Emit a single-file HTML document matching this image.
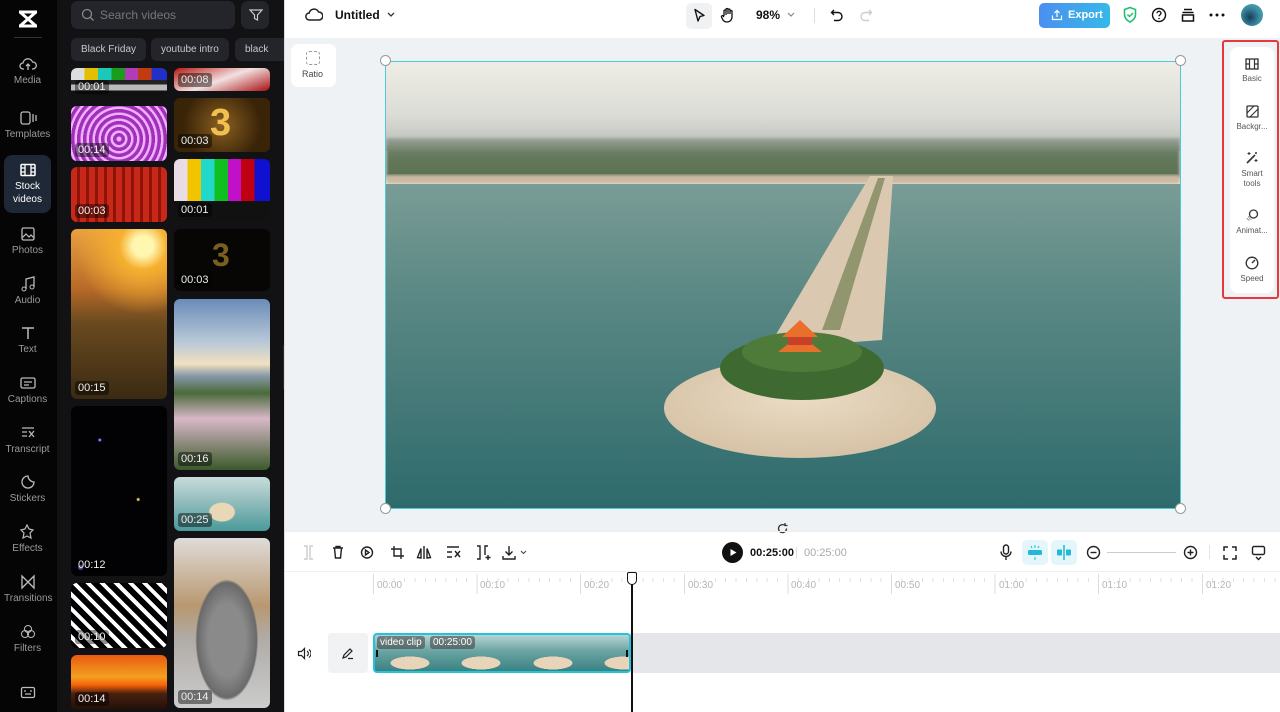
<!DOCTYPE html>
<html><head><meta charset="utf-8"><style>
*{box-sizing:border-box;margin:0;padding:0}
body{width:1280px;height:712px;overflow:hidden;font-family:"Liberation Sans",sans-serif;background:#fff;position:relative}
.abs{position:absolute}
#rail{left:0;top:0;width:57px;height:712px;background:#050505}
.ri{position:absolute;left:4px;width:47px;text-align:center;color:#9a9a9e;font-size:10px}
.ri svg{display:block;margin:0 auto 3px}
#panel{left:57px;top:0;width:227px;height:712px;background:#121215}
.th{position:absolute;border-radius:6px;overflow:hidden}
.th span{position:absolute;left:4px;bottom:4px;background:rgba(0,0,0,.45);color:#eee;font-size:11px;padding:1px 3px;border-radius:3px}
.tag{position:absolute;top:38px;height:23px;background:#24252a;border-radius:6px;color:#c8c8cc;font-size:10px;line-height:23px;padding:0 10px;white-space:nowrap}
#canvas{left:285px;top:38px;width:995px;height:493px;background:#eff2f5}
.ic{position:absolute}
.rb{position:absolute;left:0;width:48px;text-align:center;color:#555;font-size:8px;line-height:10px}
.rb svg{display:block;margin:0 auto 4px}
.rl{position:absolute;top:580px;font-size:10px;color:#b5b5b8}
</style></head><body>

<div id="rail" class="abs">
  <svg class="abs" style="left:16px;top:9px" width="24" height="20" viewBox="0 0 24 20"><path d="M3 3 L21 3 M3 17 L21 17 M4 3 L20 17 M20 3 L4 17" stroke="#fff" stroke-width="3" fill="none"/></svg>
  <div class="abs" style="left:14px;top:37px;width:28px;height:1px;background:#333"></div>
  <div class="ri" style="top:56px"><svg width="18" height="16" viewBox="0 0 18 16"><path d="M5 13H4a3 3 0 010-6 5 5 0 019.6-1A3.5 3.5 0 0114 13h-1M9 14V8M7 10l2-2 2 2" stroke="#bbb" stroke-width="1.3" fill="none"/></svg>Media</div>
  <div class="ri" style="top:110px"><svg width="18" height="16" viewBox="0 0 18 16"><rect x="2" y="2" width="9" height="12" rx="2" stroke="#bbb" stroke-width="1.3" fill="none"/><path d="M14 4v8M17 5v6" stroke="#bbb" stroke-width="1.3"/></svg>Templates</div>
  <div class="abs" style="left:4px;top:155px;width:47px;height:58px;background:#1f2836;border-radius:8px"></div>
  <div class="ri" style="top:163px;color:#fff;line-height:13px"><svg width="18" height="14" viewBox="0 0 18 14"><rect x="2" y="1.5" width="14" height="11" rx="1" stroke="#fff" stroke-width="1.5" fill="none"/><path d="M6 1.5v11M12 1.5v11M2 5h4M2 9h4M12 5h4M12 9h4" stroke="#fff" stroke-width="1.3"/></svg>Stock<br>videos</div>
  <div class="ri" style="top:226px"><svg width="18" height="16" viewBox="0 0 18 16"><rect x="3" y="2" width="12" height="12" rx="1.5" stroke="#bbb" stroke-width="1.3" fill="none"/><path d="M3 12l4-4 3 3 2-2 3 3" stroke="#bbb" stroke-width="1.2" fill="none"/></svg>Photos</div>
  <div class="ri" style="top:276px"><svg width="18" height="16" viewBox="0 0 18 16"><path d="M7 13V3l8-2v10" stroke="#bbb" stroke-width="1.3" fill="none"/><circle cx="5" cy="13" r="2" stroke="#bbb" fill="none"/><circle cx="13" cy="11" r="2" stroke="#bbb" fill="none"/></svg>Audio</div>
  <div class="ri" style="top:325px"><svg width="18" height="16" viewBox="0 0 18 16"><path d="M3 3h12M9 3v11" stroke="#bbb" stroke-width="1.5"/></svg>Text</div>
  <div class="ri" style="top:375px"><svg width="18" height="16" viewBox="0 0 18 16"><rect x="2" y="3" width="14" height="10" rx="1.5" stroke="#bbb" stroke-width="1.3" fill="none"/><path d="M5 7h8M5 10h5" stroke="#bbb" stroke-width="1.2"/></svg>Captions</div>
  <div class="ri" style="top:425px"><svg width="18" height="16" viewBox="0 0 18 16"><path d="M3 3h12M3 7h5M3 11h5M10 6l5 6M15 6l-5 6" stroke="#bbb" stroke-width="1.3"/></svg>Transcript</div>
  <div class="ri" style="top:474px"><svg width="18" height="16" viewBox="0 0 18 16"><path d="M15 8a6 6 0 11-6-6c0 3 3 6 6 6z" stroke="#bbb" stroke-width="1.3" fill="none"/></svg>Stickers</div>
  <div class="ri" style="top:524px"><svg width="18" height="16" viewBox="0 0 18 16"><path d="M8 1l2 4 4 1-3 3 1 5-4-2-4 2 1-5-3-3 4-1z" stroke="#bbb" stroke-width="1.2" fill="none"/></svg>Effects</div>
  <div class="ri" style="top:574px"><svg width="18" height="16" viewBox="0 0 18 16"><path d="M3 2v12l12-12v12z" stroke="#bbb" stroke-width="1.3" fill="none"/></svg>Transitions</div>
  <div class="ri" style="top:624px"><svg width="18" height="16" viewBox="0 0 18 16"><circle cx="9" cy="5" r="3.5" stroke="#bbb" fill="none"/><circle cx="6" cy="10" r="3.5" stroke="#bbb" fill="none"/><circle cx="12" cy="10" r="3.5" stroke="#bbb" fill="none"/></svg>Filters</div>
  <svg class="abs" style="left:20px;top:686px" width="16" height="14" viewBox="0 0 16 14"><rect x="1.5" y="1.5" width="13" height="10" rx="1.5" stroke="#bbb" stroke-width="1.3" fill="none"/><path d="M5 4v2M11 4v2M5 8h6" stroke="#bbb" stroke-width="1.2"/></svg>
</div>

<div id="panel" class="abs">
  <div class="abs" style="left:14px;top:1px;width:164px;height:28px;background:#24252a;border-radius:7px"></div>
  <svg class="abs" style="left:24px;top:8px" width="14" height="14" viewBox="0 0 14 14"><circle cx="6" cy="6" r="4.5" stroke="#888" stroke-width="1.3" fill="none"/><path d="M9.5 9.5l3 3" stroke="#888" stroke-width="1.3"/></svg>
  <div class="abs" style="left:43px;top:8px;color:#777;font-size:12px">Search videos</div>
  <div class="abs" style="left:184px;top:1px;width:28px;height:28px;background:#24252a;border-radius:7px"></div>
  <svg class="abs" style="left:192px;top:8px" width="14" height="14" viewBox="0 0 14 14"><path d="M1 2h12l-4.5 5v5l-3-1.5V7z" stroke="#ccc" stroke-width="1.2" fill="none"/></svg>
  <div class="tag" style="left:14px">Black Friday</div>
  <div class="tag" style="left:94px">youtube intro</div>
  <div class="tag" style="left:178px;width:49px;border-radius:6px 0 0 6px">black</div>

  <div class="th" style="left:14px;top:68px;width:96px;height:30px;background:linear-gradient(#0000 0 40%,#222 40% 55%,#bbb 55% 75%,#111 75%),linear-gradient(90deg,#ddd 0 14%,#e2c000 14% 28%,#1cc8b8 28% 42%,#1a9d1a 42% 56%,#b03cb8 56% 70%,#c23a10 70% 84%,#2230c8 84%)"><span>00:01</span></div>
  <div class="th" style="left:14px;top:106px;width:96px;height:55px;background:repeating-radial-gradient(circle at 50% 60%,#f0b0ff 0 2px,#a030b8 3px 6px),#a030b8"><span>00:14</span></div>
  <div class="th" style="left:14px;top:167px;width:96px;height:55px;background:repeating-linear-gradient(90deg,#c8281a 0 6px,#8e1408 6px 9px)"><span>00:03</span></div>
  <div class="th" style="left:14px;top:229px;width:96px;height:170px;background:radial-gradient(circle at 75% 10%,#fff6b0 0 6%,#f6b030 14%,transparent 40%),linear-gradient(#e8a040,#b86a28 35%,#6a4a20 55%,#3a2a12)"><span>00:15</span></div>
  <div class="th" style="left:14px;top:406px;width:96px;height:170px;background:radial-gradient(circle at 30% 20%,#8878ff 0 1px,transparent 2px),radial-gradient(circle at 70% 55%,#e8c060 0 1px,transparent 2px),radial-gradient(circle at 10% 95%,#9080ff 0 2px,transparent 3px),#020204"><span>00:12</span></div>
  <div class="th" style="left:14px;top:583px;width:96px;height:65px;background:repeating-linear-gradient(45deg,#000 0 6px,#fff 6px 10px)"><span>00:10</span></div>
  <div class="th" style="left:14px;top:655px;width:96px;height:55px;background:linear-gradient(#e85a10,#f4a020 40%,#f66008 55%,#4a2010 70%,#201008)"><span>00:14</span></div>

  <div class="th" style="left:117px;top:68px;width:96px;height:23px;background:linear-gradient(160deg,#b81a10,#f2e0e0 50%,#a81010)"><span>00:08</span></div>
  <div class="th" style="left:117px;top:98px;width:96px;height:54px;background:radial-gradient(circle at 50% 50%,#8a6020,#3a2408 70%)"><div style="position:absolute;left:36px;top:4px;font-size:38px;font-weight:bold;color:#f2c050">3</div><span>00:03</span></div>
  <div class="th" style="left:117px;top:159px;width:96px;height:62px;background:linear-gradient(#0000 0 68%,#111 68%),linear-gradient(90deg,#e8dde4 0 14%,#f2c400 14% 28%,#22d8c8 28% 42%,#10c020 42% 56%,#c010c8 56% 70%,#c00010 70% 84%,#1010d0 84%)"><span>00:01</span></div>
  <div class="th" style="left:117px;top:229px;width:96px;height:62px;background:#070604"><div style="position:absolute;left:38px;top:8px;font-size:32px;font-weight:bold;color:#7a6020">3</div><span>00:03</span></div>
  <div class="th" style="left:117px;top:299px;width:96px;height:171px;background:linear-gradient(#6a8cb8,#b8c8d8 25%,#f0e0c0 38%,#8898a8 45%,#4a6a3a 55%,#d8b8c8 70%,#3a5a2a)"><span>00:16</span></div>
  <div class="th" style="left:117px;top:477px;width:96px;height:54px;background:radial-gradient(ellipse at 50% 65%,#e8d8b8 0 18%,transparent 20%),linear-gradient(#c8dcdc,#9ac0c0 40%,#4a9a9a)"><span>00:25</span></div>
  <div class="th" style="left:117px;top:538px;width:96px;height:170px;background:radial-gradient(ellipse at 55% 60%,#8a8a8a 0 25%,#6a6a6a 40%,transparent 42%),linear-gradient(#e0dcd8,#b89870 40%,#b0aca8 60%,#ccc)"><span>00:14</span></div>
</div>
<div class="abs" style="left:283px;top:345px;width:8px;height:44px;background:#2a2a2e;border-radius:0 4px 4px 0"></div>
<div class="abs" style="left:284px;top:0;width:1px;height:712px;background:#ddd"></div>

<!-- top bar -->
<svg class="ic" style="left:305px;top:7px" width="18" height="16" viewBox="0 0 18 16"><path d="M5 13H4.5a3.5 3.5 0 01-.3-7A5 5 0 0113.6 5 3.7 3.7 0 0114 13z" stroke="#222" stroke-width="1.5" fill="none"/></svg>
<div class="abs" style="left:335px;top:8px;font-size:12px;font-weight:bold;color:#111">Untitled</div>
<svg class="ic" style="left:386px;top:11px" width="10" height="8" viewBox="0 0 10 8"><path d="M2 2l3 3 3-3" stroke="#333" stroke-width="1.3" fill="none"/></svg>
<div class="abs" style="left:686px;top:3px;width:26px;height:26px;background:#f0f1f3;border-radius:5px"></div>
<svg class="ic" style="left:693px;top:8px" width="13" height="15" viewBox="0 0 13 15"><path d="M2 1.5l9 6-4 1-2 4.5z" stroke="#111" stroke-width="1.4" fill="none" stroke-linejoin="round"/></svg>
<svg class="ic" style="left:720px;top:7px" width="16" height="17" viewBox="0 0 16 17"><path d="M4 9V4a1 1 0 012 0v4M6 7V2.5a1 1 0 012 0V7M8 7V3a1 1 0 012 0v4M10 7V4.5a1 1 0 012 0V10a5 5 0 01-5 5 5 5 0 01-4-2L1.5 10a1 1 0 011.5-1.2L4 10" stroke="#111" stroke-width="1.3" fill="none"/></svg>
<div class="abs" style="left:756px;top:8px;font-size:12px;font-weight:bold;color:#111">98%</div>
<svg class="ic" style="left:786px;top:11px" width="10" height="8" viewBox="0 0 10 8"><path d="M2 2l3 3 3-3" stroke="#888" stroke-width="1.2" fill="none"/></svg>
<div class="abs" style="left:814px;top:8px;width:1px;height:15px;background:#ddd"></div>
<svg class="ic" style="left:830px;top:8px" width="14" height="14" viewBox="0 0 14 14"><path d="M4 2L1.5 4.5 4 7M1.5 4.5H8a4 4 0 010 8H4" stroke="#111" stroke-width="1.4" fill="none"/></svg>
<svg class="ic" style="left:859px;top:8px" width="14" height="14" viewBox="0 0 14 14"><path d="M10 2l2.5 2.5L10 7M12.5 4.5H6a4 4 0 000 8h4" stroke="#ccc" stroke-width="1.4" fill="none"/></svg>
<div class="abs" style="left:1039px;top:3px;width:71px;height:25px;background:linear-gradient(90deg,#4a90f0,#36b8e8);border-radius:5px;color:#fff;font-size:11px;font-weight:bold;line-height:25px;padding-left:29px">Export</div>
<svg class="ic" style="left:1051px;top:9px" width="12" height="12" viewBox="0 0 12 12"><path d="M6 8V1.5M3.5 4L6 1.5 8.5 4M1.5 6.5v4h9v-4" stroke="#fff" stroke-width="1.2" fill="none"/></svg>
<svg class="ic" style="left:1122px;top:6px" width="16" height="18" viewBox="0 0 16 18"><path d="M8 1.5l5.5 2v5c0 3.5-2.5 6-5.5 7.5C5 14.5 2.5 12 2.5 8.5v-5z" stroke="#1ec070" stroke-width="1.6" fill="none"/><path d="M5.5 8.5l2 2 3.5-3.5" stroke="#1ec070" stroke-width="1.5" fill="none"/></svg>
<svg class="ic" style="left:1151px;top:7px" width="16" height="16" viewBox="0 0 16 16"><circle cx="8" cy="8" r="6.5" stroke="#111" stroke-width="1.4" fill="none"/><path d="M6 6.3a2 2 0 114 0c0 1.3-2 1.6-2 3" stroke="#111" stroke-width="1.3" fill="none"/><circle cx="8" cy="11.5" r=".8" fill="#111"/></svg>
<svg class="ic" style="left:1180px;top:7px" width="16" height="16" viewBox="0 0 16 16"><path d="M4 2.5h8M2.5 5.5h11M2.5 8h11v6h-11z" stroke="#111" stroke-width="1.5" fill="none"/></svg>
<svg class="ic" style="left:1209px;top:13px" width="16" height="4" viewBox="0 0 16 4"><circle cx="2" cy="2" r="1.5" fill="#111"/><circle cx="8" cy="2" r="1.5" fill="#111"/><circle cx="14" cy="2" r="1.5" fill="#111"/></svg>
<div class="abs" style="left:1241px;top:4px;width:22px;height:22px;border-radius:50%;background:radial-gradient(circle at 40% 60%,#1a3a5a,#3a8aa0 50%,#5ab0c0)"></div>

<!-- canvas -->
<div id="canvas" class="abs"></div>
<div class="abs" style="left:291px;top:44px;width:45px;height:43px;background:#fff;border-radius:7px"></div>
<div class="abs" style="left:306px;top:51px;width:14px;height:14px;border:1.3px dashed #999;border-radius:3px"></div>
<div class="abs" style="left:302px;top:69px;font-size:9px;color:#444">Ratio</div>

<svg class="abs" style="left:386px;top:61px" width="794" height="447" viewBox="386 61 794 447">
  <defs>
    <linearGradient id="sky" x1="0" y1="0" x2="0" y2="1"><stop offset="0" stop-color="#eeeee6"/><stop offset=".6" stop-color="#dcdcd6"/><stop offset="1" stop-color="#b8bcb6"/></linearGradient>
    <linearGradient id="tree" x1="0" y1="0" x2="0" y2="1"><stop offset="0" stop-color="#9aa49a"/><stop offset=".4" stop-color="#667a5e"/><stop offset="1" stop-color="#5a7050"/></linearGradient>
    <linearGradient id="wat" x1="0" y1="0" x2="0" y2="1"><stop offset="0" stop-color="#7a9c96"/><stop offset=".35" stop-color="#5a8884"/><stop offset="1" stop-color="#2e6a6c"/></linearGradient>
    <radialGradient id="isl" cx=".5" cy=".4" r=".6"><stop offset="0" stop-color="#eadcc4"/><stop offset="1" stop-color="#d6c2a6"/></radialGradient>
    <filter id="bl"><feGaussianBlur stdDeviation="1.5"/></filter>
  </defs>
  <rect x="386" y="61" width="794" height="90" fill="url(#sky)"/>
  <rect x="386" y="138" width="794" height="40" fill="url(#tree)" filter="url(#bl)"/>
  <rect x="386" y="175" width="794" height="9" fill="#cbb9a0" filter="url(#bl)"/>
  <rect x="386" y="184" width="794" height="324" fill="url(#wat)"/>
  <path d="M870 176 L893 176 L882 340 L768 348 Z" fill="#dac9b0"/>
  <path d="M878 178 L885 178 L840 330 L822 330 Z" fill="#7a8458" opacity=".75"/>
  <ellipse cx="800" cy="408" rx="136" ry="50" fill="url(#isl)"/>
  <ellipse cx="802" cy="368" rx="82" ry="32" fill="#3e6a32"/>
  <ellipse cx="802" cy="352" rx="60" ry="20" fill="#4e7a3a"/>
  <path d="M782 337 L800 320 L818 337 Z M778 352 L822 352 L812 344 L788 344Z" fill="#e8702a"/>
  <rect x="788" y="337" width="24" height="8" fill="#c8402a"/>
</svg>
<div class="abs" style="left:385px;top:61px;width:796px;height:448px;border:1.5px solid #4ecad6"></div>
<div class="abs" style="left:380px;top:55px;width:11px;height:11px;border-radius:50%;background:#fff;border:1px solid #999"></div>
<div class="abs" style="left:1175px;top:55px;width:11px;height:11px;border-radius:50%;background:#fff;border:1px solid #999"></div>
<div class="abs" style="left:380px;top:503px;width:11px;height:11px;border-radius:50%;background:#fff;border:1px solid #999"></div>
<div class="abs" style="left:1175px;top:503px;width:11px;height:11px;border-radius:50%;background:#fff;border:1px solid #999"></div>
<svg class="ic" style="left:776px;top:522px" width="13" height="13" viewBox="0 0 13 13"><path d="M10.5 6.5a4 4 0 11-1.5-3M9 1v2.5h2.5" stroke="#333" stroke-width="1.3" fill="none"/></svg>

<!-- right panel -->
<div class="abs" style="left:1222px;top:40px;width:57px;height:259px;border:2.5px solid #e8383c;border-radius:3px"></div>
<div class="abs" style="left:1230px;top:47px;width:44px;height:246px;background:#fff;border-radius:8px"></div>
<div class="abs" style="left:1228px;top:0">
  <div class="rb" style="top:58px"><svg width="14" height="12" viewBox="0 0 14 12"><rect x="1" y="1" width="12" height="10" stroke="#333" stroke-width="1.3" fill="none"/><path d="M4.5 1v10M9.5 1v10M1 6h3.5M9.5 6H13" stroke="#333" stroke-width="1.2"/></svg>Basic</div>
  <div class="rb" style="top:105px"><svg width="13" height="13" viewBox="0 0 13 13"><rect x="1" y="1" width="11" height="11" rx="1" stroke="#333" stroke-width="1.3" fill="none"/><path d="M1 8l7-7M4 12l8-8" stroke="#333" stroke-width="1.1"/></svg>Backgr...</div>
  <div class="rb" style="top:151px"><svg width="14" height="14" viewBox="0 0 14 14"><path d="M2 12l8-8" stroke="#333" stroke-width="1.6"/><path d="M4 1v3M2.5 2.5h3M11 8v3M9.5 9.5h3M11 1v2M10 2h2" stroke="#333" stroke-width="1"/></svg>Smart<br>tools</div>
  <div class="rb" style="top:208px"><svg width="14" height="14" viewBox="0 0 14 14"><circle cx="8.5" cy="6" r="4" stroke="#333" stroke-width="1.3" fill="none"/><path d="M3.5 8a4 4 0 003 3.5M2 10a4 4 0 002.5 2.5" stroke="#999" stroke-width="1" fill="none"/></svg>Animat...</div>
  <div class="rb" style="top:256px"><svg width="14" height="14" viewBox="0 0 14 14"><circle cx="7" cy="7" r="5.8" stroke="#333" stroke-width="1.3" fill="none"/><path d="M7 7l3-3" stroke="#333" stroke-width="1.4"/></svg>Speed</div>
</div>

<!-- timeline toolbar -->
<div class="abs" style="left:285px;top:531px;width:995px;height:1px;background:#eceef0"></div>
<svg class="abs" style="left:300px;top:544px" width="240" height="17" viewBox="0 0 240 17">
  <g fill="none" stroke-width="1.4">
    <path d="M4 2h3v13H4M13 2h-3v13h3" stroke="#ccc"/>
    <path d="M33 4h10M36 4V2.5h4V4M34.5 4l1 10h5l1-10" stroke="#222"/>
    <circle cx="67" cy="8.5" r="5.5" stroke="#222"/><path d="M65.5 6v5l3.5-2.5z" stroke="#222"/>
    <path d="M94 2v10h10M91 5h10v10" stroke="#222"/>
    <path d="M124 2v13M121 14l-3.5-0.5 3.5-9zM127 14l3.5-.5-3.5-9z" stroke="#222"/>
    <path d="M147 3h12M147 8h5M147 13h5M155 7l5 6M160 7l-5 6" stroke="#222"/>
    <path d="M177 2h3v13h-3M188 2h-3v9M188 11v5M185.5 13.5h5" stroke="#222"/>
    <path d="M209 2v9M205.5 7.5L209 11l3.5-3.5M203 12v3h12v-3" stroke="#222"/>
    <path d="M221 7l2.5 2.5L226 7" stroke="#444" stroke-width="1"/>
  </g>
</svg>
<div class="abs" style="left:722px;top:542px;width:21px;height:21px;border-radius:50%;background:#111"></div>
<svg class="ic" style="left:729px;top:548px" width="9" height="9" viewBox="0 0 9 9"><path d="M1.5 1v7l6-3.5z" fill="#fff"/></svg>
<div class="abs" style="left:750px;top:547px;font-size:11px;font-weight:bold;color:#111">00:25:00</div>
<div class="abs" style="left:796px;top:547px;width:1px;height:11px;background:#ddd"></div>
<div class="abs" style="left:804px;top:547px;font-size:11px;color:#aaa">00:25:00</div>
<svg class="ic" style="left:999px;top:544px" width="14" height="17" viewBox="0 0 14 17"><rect x="4.5" y="1" width="5" height="9" rx="2.5" stroke="#222" stroke-width="1.4" fill="none"/><path d="M2 7.5a5 5 0 0010 0M7 12.5V16" stroke="#222" stroke-width="1.4" fill="none"/></svg>
<div class="abs" style="left:1022px;top:540px;width:26px;height:25px;background:#e4f6fa;border-radius:5px"></div>
<div class="abs" style="left:1051px;top:540px;width:26px;height:25px;background:#e4f6fa;border-radius:5px"></div>
<svg class="ic" style="left:1027px;top:545px" width="16" height="15" viewBox="0 0 16 15"><rect x="1" y="5" width="14" height="5" rx="1.5" fill="#22b8d8"/><path d="M8 0v3M8 12v3M4 1l1 2M12 1l-1 2" stroke="#22b8d8" stroke-width="1"/></svg>
<svg class="ic" style="left:1056px;top:545px" width="16" height="15" viewBox="0 0 16 15"><rect x="1" y="4.5" width="5" height="6" rx="1" fill="#22b8d8"/><rect x="10" y="4.5" width="5" height="6" rx="1" fill="#22b8d8"/><path d="M8 0v15" stroke="#22b8d8" stroke-width="1.5"/></svg>
<svg class="ic" style="left:1086px;top:545px" width="15" height="15" viewBox="0 0 15 15"><circle cx="7.5" cy="7.5" r="6" stroke="#222" stroke-width="1.4" fill="none"/><path d="M4.5 7.5h6" stroke="#222" stroke-width="1.4"/></svg>
<div class="abs" style="left:1107px;top:552px;width:69px;height:1px;background:#ccc"></div>
<svg class="ic" style="left:1183px;top:545px" width="15" height="15" viewBox="0 0 15 15"><circle cx="7.5" cy="7.5" r="6" stroke="#222" stroke-width="1.4" fill="none"/><path d="M4.5 7.5h6M7.5 4.5v6" stroke="#222" stroke-width="1.4"/></svg>
<div class="abs" style="left:1209px;top:545px;width:1px;height:14px;background:#e5e5e5"></div>
<svg class="ic" style="left:1223px;top:546px" width="14" height="14" viewBox="0 0 14 14"><path d="M1 5V1h4M9 1h4v4M13 9v4H9M5 13H1V9" stroke="#222" stroke-width="1.5" fill="none"/></svg>
<svg class="ic" style="left:1251px;top:545px" width="15" height="16" viewBox="0 0 15 16"><rect x="1.5" y="1.5" width="12" height="8" rx="1.5" stroke="#222" stroke-width="1.4" fill="none"/><path d="M5 12l2.5 2.5L10 12" stroke="#222" stroke-width="1.4" fill="none"/></svg>

<!-- ruler -->
<div class="abs" style="left:285px;top:571px;width:995px;height:1px;background:#f0f0f2"></div>
<div class="abs" style="left:373px;top:578px;width:907px;height:4px;background:repeating-linear-gradient(90deg,#e0e0e2 0 1px,transparent 1px 10.36px)"></div>
<div class="abs" style="left:373px;top:574px;width:907px;height:20px;background:repeating-linear-gradient(90deg,#dcdcde 0 1px,transparent 1px 103.6px)"></div>
<div class="rl" style="left:377px">00:00</div><div class="rl" style="left:480px">00:10</div><div class="rl" style="left:584px">00:20</div><div class="rl" style="left:688px">00:30</div><div class="rl" style="left:791px">00:40</div><div class="rl" style="left:895px">00:50</div><div class="rl" style="left:999px">01:00</div><div class="rl" style="left:1102px">01:10</div><div class="rl" style="left:1206px">01:20</div>

<!-- track -->
<svg class="ic" style="left:297px;top:647px" width="14" height="13" viewBox="0 0 14 13"><path d="M1.5 4.5h3l3-3v10l-3-3h-3z" stroke="#222" stroke-width="1.2" fill="none"/><path d="M10 4a3 3 0 010 5M12 2.5a5 5 0 010 8" stroke="#222" stroke-width="1.1" fill="none"/></svg>
<div class="abs" style="left:328px;top:633px;width:40px;height:40px;background:#f1f2f4;border-radius:4px"></div>
<svg class="ic" style="left:341px;top:647px" width="13" height="13" viewBox="0 0 13 13"><path d="M2 11l1-3 6-6 2 2-6 6zM7 11.5h5" stroke="#222" stroke-width="1.2" fill="none"/></svg>
<div class="abs" style="left:630px;top:633px;width:650px;height:40px;background:#e4e6e9"></div>
<div class="abs" style="left:373px;top:633px;width:258px;height:40px;border:2px solid #22c4dc;border-radius:4px;overflow:hidden;background:#5a9a98">
  <div style="position:absolute;inset:0;background:radial-gradient(ellipse 24px 8px at 35px 28px,#e8d4b8 80%,transparent 82%),radial-gradient(ellipse 24px 8px at 106px 28px,#e8d4b8 80%,transparent 82%),radial-gradient(ellipse 24px 8px at 178px 28px,#e8d4b8 80%,transparent 82%),radial-gradient(ellipse 24px 8px at 249px 28px,#e8d4b8 80%,transparent 82%),linear-gradient(#b8d4d4,#6aa4a2 45%,#3a8282)"></div>
  <div style="position:absolute;left:2px;top:1px;background:rgba(60,60,60,.55);color:#fff;font-size:10px;padding:1px 3px;border-radius:3px">video clip</div>
  <div style="position:absolute;left:55px;top:1px;background:rgba(60,60,60,.55);color:#fff;font-size:10px;padding:1px 3px;border-radius:3px">00:25:00</div>
  <div style="position:absolute;left:1px;top:15px;width:2px;height:7px;background:#111"></div>
  <div style="position:absolute;right:1px;top:15px;width:2px;height:7px;background:#111"></div>
</div>
<div class="abs" style="left:631px;top:584px;width:2px;height:128px;background:#111"></div>
<div class="abs" style="left:627px;top:572px;width:10px;height:13px;background:#fff;border:1.5px solid #111;border-radius:2px 2px 5px 5px"></div>
</body></html>
